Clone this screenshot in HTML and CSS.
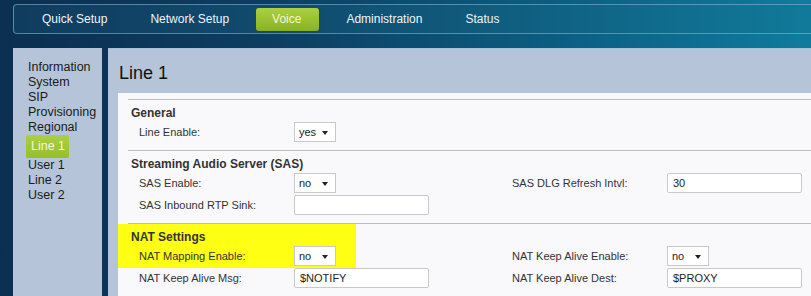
FILE: index.html
```html
<!DOCTYPE html>
<html lang="en">
  <head>
    <meta charset="UTF-8" />
    <title>Voice - Line 1</title>
    <link rel="stylesheet" href="styles.css">
  </head>
  <body>
    <div class="topbar">
      <nav class="tabs">
        <a class="tab">Quick Setup</a>
        <a class="tab">Network Setup</a>
        <a class="tab tab-active">Voice</a>
        <a class="tab">Administration</a>
        <a class="tab">Status</a>
      </nav>
    </div>

    <div class="layout">
      <ul class="sidebar">
        <li>Information</li>
        <li>System</li>
        <li>SIP</li>
        <li>Provisioning</li>
        <li>Regional</li>
        <li class="current">Line 1</li>
        <li>User 1</li>
        <li>Line 2</li>
        <li>User 2</li>
      </ul>

      <div class="main">
        <h1 class="page-title">Line 1</h1>

        <div class="content">
          <section class="group">
            <h2>General</h2>
            <div class="row">
              <span class="label">Line Enable:</span>
              <span class="field"><span class="select">yes</span></span>
            </div>
          </section>

          <section class="group">
            <h2>Streaming Audio Server (SAS)</h2>
            <div class="row">
              <span class="label">SAS Enable:</span>
              <span class="field"><span class="select">no</span></span>
              <span class="label">SAS DLG Refresh Intvl:</span>
              <span class="field"><span class="input">30</span></span>
            </div>
            <div class="row">
              <span class="label">SAS Inbound RTP Sink:</span>
              <span class="field"><span class="input"></span></span>
            </div>
          </section>

          <section class="group">
            <!-- annotation highlight -->
            <div class="mark"></div>
            <h2>NAT Settings</h2>
            <div class="row">
              <span class="label">NAT Mapping Enable:</span>
              <span class="field"><span class="select">no</span></span>
              <span class="label">NAT Keep Alive Enable:</span>
              <span class="field"><span class="select">no</span></span>
            </div>
            <div class="row">
              <span class="label">NAT Keep Alive Msg:</span>
              <span class="field"><span class="input">$NOTIFY</span></span>
              <span class="label">NAT Keep Alive Dest:</span>
              <span class="field"><span class="input">$PROXY</span></span>
            </div>
          </section>
        </div>
      </div>
    </div>
  </body>
</html>
```

FILE: styles.css
```css
:root {
  --panel: #b5c4d8;
  --green: #97bf2c;
  --green-light: #abd043;
  --text: #1a1a1a;
  --label: #333333;
  --rule: #bdbdbd;
  --field-border: #c9c9c9;
}

* {
  box-sizing: border-box;
  margin: 0;
  padding: 0;
}

body {
  font-family: "Liberation Sans", Arial, sans-serif;
  background: linear-gradient(90deg, #0b2f50 0%, #0c3f63 35%, #0b5f82 70%, #0f7c9e 100%);
  height: 296px;
  overflow: hidden;
  color: var(--text);
}

.topbar {
  padding: 4px 0 0 13px;
}

.tabs {
  display: flex;
  align-items: center;
  gap: 11px;
  height: 30px;
  padding-left: 12px;
  border: 1px solid rgba(140, 190, 215, 0.55);
  border-right: none;
  border-radius: 4px 0 0 4px;
  background: linear-gradient(90deg, rgba(20, 70, 105, 0.6), rgba(20, 120, 150, 0.5));
}

.tab {
  font-size: 12px;
  color: #eef4f8;
  padding: 0 16px;
  line-height: 22px;
  height: 23px;
  text-decoration: none;
}

.tab-active {
  padding: 0 18px 0 16px;
  background: linear-gradient(180deg, var(--green-light), var(--green) 60%, #8ab026);
  color: #f4f6dc;
  border-radius: 3px;
}

.layout {
  display: flex;
  gap: 6px;
  margin-top: 14px;
  padding-left: 13px;
  height: 260px;
}

.sidebar {
  list-style: none;
  width: 89px;
  flex-shrink: 0;
  background: var(--panel);
  padding: 12px 0 0 15px;
  font-size: 12.5px;
  line-height: 15px;
}

.sidebar .current {
  display: inline-block;
  margin-left: -2px;
  padding: 4px 4px 4px 5px;
  background: linear-gradient(180deg, var(--green-light), var(--green));
  color: #f4f6dc;
  border-radius: 2px;
}

.main {
  flex: 1;
  display: flex;
  flex-direction: column;
  background: var(--panel);
  border-top: 1px solid #a6c1db;
  padding-left: 10px;
}

.page-title {
  font-size: 18px;
  font-weight: normal;
  line-height: 22px;
  color: #111;
  height: 44px;
  padding: 13px 0 0 1px;
}

.content {
  flex: 1;
  background: #f9f9fb;
  padding: 6px 0 0 10px;
}

.group {
  position: relative;
  isolation: isolate;
  border-top: 1px solid var(--rule);
  padding: 5px 0 7px 0;
}

.group h2 {
  font-size: 12px;
  font-weight: bold;
  line-height: 16px;
  color: var(--label);
  padding-left: 3px;
}

.row {
  display: grid;
  grid-template-columns: 155px 218px 155px 1fr;
  align-items: center;
  height: 22px;
  padding-left: 11px;
  font-size: 11px;
  color: var(--label);
}

.select,
.input {
  display: flex;
  align-items: center;
  height: 20px;
  background: #ffffff;
  border: 1px solid var(--field-border);
  color: #222;
  font-size: 11px;
}

.select {
  width: 42px;
  padding-left: 4px;
  position: relative;
}

.select::after {
  content: "";
  position: absolute;
  right: 7px;
  top: 8px;
  border-left: 3.5px solid transparent;
  border-right: 3.5px solid transparent;
  border-top: 4px solid #222;
}

.input {
  width: 135px;
  padding-left: 5px;
  border-radius: 2px;
}

.mark {
  position: absolute;
  z-index: -1;
  left: -10px;
  top: 0;
  width: 238px;
  height: 44px;
  background: #ffff14;
}
```
